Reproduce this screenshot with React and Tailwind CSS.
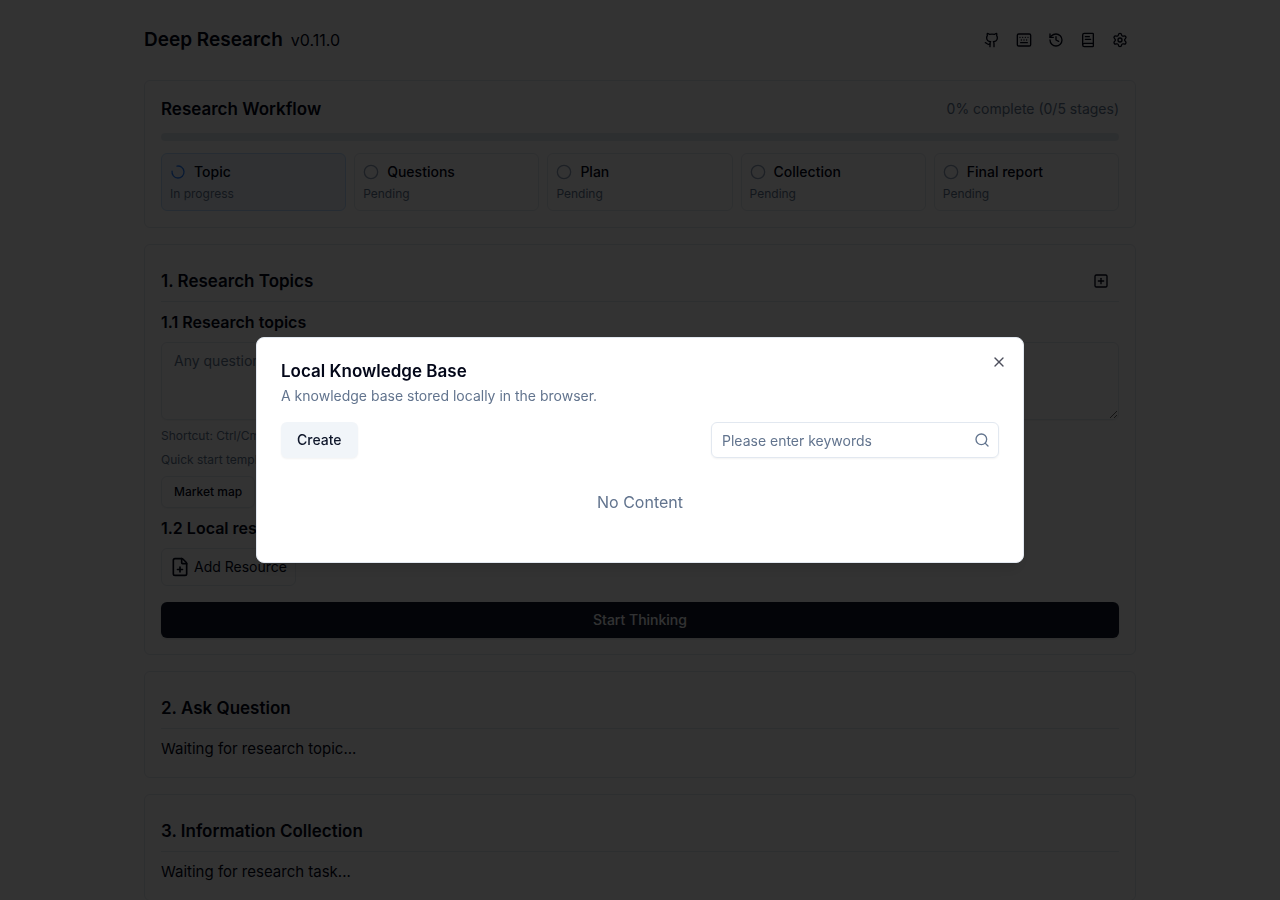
import { useState } from 'react';
import {
  Circle,
  FilePlus,
  Github,
  History,
  LoaderCircle,
  Search,
  Settings,
  SquarePlus,
  X,
} from 'lucide-react';

const steps = [
  { title: 'Topic', status: 'In progress', active: true },
  { title: 'Questions', status: 'Pending' },
  { title: 'Plan', status: 'Pending' },
  { title: 'Collection', status: 'Pending' },
  { title: 'Final report', status: 'Pending' },
];

const templates = ['Market map', 'Competitor analysis', 'Technical review'];

function KeyboardIcon({ className }) {
  return (
    <svg
      className={className}
      viewBox="0 0 24 24"
      fill="none"
      stroke="currentColor"
      strokeWidth={2}
      strokeLinecap="round"
      strokeLinejoin="round"
    >
      <rect x="2" y="3" width="20" height="18" rx="2" />
      <path d="M6 8h.01M10 8h.01M14 8h.01M18 8h.01M8 12h.01M12 12h.01M16 12h.01M7 16h10" />
    </svg>
  );
}

function BookIcon({ className }) {
  return (
    <svg
      className={className}
      viewBox="0 0 24 24"
      fill="none"
      stroke="currentColor"
      strokeWidth={2}
      strokeLinecap="round"
      strokeLinejoin="round"
    >
      <path d="M4 19.5v-15A2.5 2.5 0 0 1 6.500 2H19a1 1 0 0 1 1 1v18a1 1 0 0 1-1 1H6.500a1 1 0 0 1 0-5H20" />
      <path d="M8 7h6M8 11h8" />
    </svg>
  );
}

const actions = [
  { label: 'GitHub', Icon: Github },
  { label: 'Keyboard shortcuts', Icon: KeyboardIcon },
  { label: 'History', Icon: History },
  { label: 'Knowledge base', Icon: BookIcon },
  { label: 'Settings', Icon: Settings },
];

function Header() {
  return (
    <header className="flex h-20 items-center justify-between">
      <h1 className="text-[19px]/7 font-semibold">
        Deep Research
        <small className="ml-2 text-base font-normal">v0.11.0</small>
      </h1>
      <div className="flex">
        {actions.map(({ label, Icon }) => (
          <button
            key={label}
            type="button"
            aria-label={label}
            className="flex h-8 w-8 items-center justify-center rounded-md hover:bg-slate-100"
          >
            <Icon className="h-4 w-4" />
          </button>
        ))}
      </div>
    </header>
  );
}

function Workflow() {
  return (
    <section className="rounded-md border border-slate-200 p-4">
      <div className="mb-3 flex items-center justify-between">
        <h3 className="text-[17px]/6 font-semibold">Research Workflow</h3>
        <span className="text-sm/6 text-slate-500">0% complete (0/5 stages)</span>
      </div>
      <div className="mb-3 h-2 rounded-full bg-slate-200" />
      <ol className="grid grid-cols-5 gap-2">
        {steps.map((step) => (
          <li
            key={step.title}
            className={
              step.active
                ? 'rounded-md border border-blue-200 bg-blue-50 p-2'
                : 'rounded-md border border-slate-200 p-2'
            }
          >
            <div className="flex items-center gap-2 text-sm font-medium">
              {step.active ? (
                <LoaderCircle className="h-4 w-4 -rotate-100 text-blue-500" />
              ) : (
                <Circle className="h-4 w-4 text-slate-400" />
              )}
              {step.title}
            </div>
            <p className="mt-1 text-xs text-slate-500">{step.status}</p>
          </li>
        ))}
      </ol>
    </section>
  );
}

function Section({ title, action, children }) {
  return (
    <section className="mt-4 rounded-md border border-slate-200 p-4">
      <div className="mb-2 flex items-center justify-between border-b border-slate-200">
        <h3 className="text-[17px]/10 font-semibold">{title}</h3>
        {action}
      </div>
      {children}
    </section>
  );
}

function Topics() {
  return (
    <Section
      title="1. Research Topics"
      action={
        <button
          type="button"
          aria-label="New research"
          className="flex h-9 w-9 items-center justify-center rounded-md hover:bg-slate-100"
        >
          <SquarePlus className="h-4 w-4" />
        </button>
      }
    >
      <label htmlFor="topic" className="block font-semibold">
        1.1 Research topics
      </label>
      <textarea
        id="topic"
        rows={3}
        placeholder="Any questions you want to know..."
        className="mt-2 block w-full rounded-md border border-slate-200 px-3 py-2 text-sm shadow-xs placeholder:text-slate-500"
      />
      <p className="mt-2 text-xs text-slate-500">Shortcut: Ctrl/Cmd+↵</p>
      <p className="mt-2 text-xs text-slate-500">Quick start templates</p>
      <div className="mt-2 flex gap-2">
        {templates.map((name) => (
          <button
            key={name}
            type="button"
            className="h-8 rounded-md border border-slate-200 px-3 text-xs font-medium shadow-xs"
          >
            {name}
          </button>
        ))}
      </div>
      <h4 className="mt-2 font-semibold">1.2 Local research resources</h4>
      <button
        type="button"
        className="mt-2 flex items-center gap-1 rounded-md border border-slate-200 p-2 text-sm"
      >
        <FilePlus className="h-5 w-5" />
        Add Resource
      </button>
      <button
        type="button"
        className="mt-4 h-9 w-full rounded-md bg-slate-900 text-sm font-medium text-slate-50 shadow-sm"
      >
        Start Thinking
      </button>
    </Section>
  );
}

function KnowledgeDialog({ onClose }) {
  return (
    <div className="fixed inset-0 z-50 flex items-center justify-center bg-black/80">
      <div
        role="dialog"
        aria-modal="true"
        aria-labelledby="dialog-title"
        className="relative w-full max-w-3xl rounded-lg border border-slate-200 bg-white p-6 shadow-lg"
      >
        <h2 id="dialog-title" className="text-[17px]/[18px] font-semibold">
          Local Knowledge Base
        </h2>
        <p className="mt-1.5 text-sm text-slate-500">
          A knowledge base stored locally in the browser.
        </p>
        <div className="mt-4 flex justify-between">
          <button
            type="button"
            className="h-9 rounded-md bg-slate-100 px-4 text-sm font-medium text-slate-900 shadow-xs"
          >
            Create
          </button>
          <label className="flex h-9 w-72 items-center rounded-md border border-slate-200 pr-2 pl-2.5 text-slate-500 shadow-xs">
            <input
              type="text"
              aria-label="Search keywords"
              placeholder="Please enter keywords"
              className="h-full min-w-0 flex-1 text-sm outline-none placeholder:text-slate-500"
            />
            <Search className="h-4 w-4" />
          </label>
        </div>
        <p className="mt-8 mb-6 text-center text-slate-500">No Content</p>
        <button
          type="button"
          aria-label="Close"
          onClick={onClose}
          className="absolute top-4 right-4 opacity-70 hover:opacity-100"
        >
          <X className="h-4 w-4" />
        </button>
      </div>
    </div>
  );
}

export default function App() {
  const [open, setOpen] = useState(true);

  return (
    <div
      className={`bg-white font-['Inter',sans-serif] text-slate-950 ${
        open ? 'h-screen overflow-hidden' : 'min-h-screen'
      }`}
    >
      <main className="mx-auto max-w-5xl px-4 pb-4">
        <Header />
        <Workflow />
        <Topics />
        <Section title="2. Ask Question">
          <p className="text-[15px]/6">Waiting for research topic...</p>
        </Section>
        <Section title="3. Information Collection">
          <p className="text-[15px]/6">Waiting for research task...</p>
        </Section>
      </main>
      {open && <KnowledgeDialog onClose={() => setOpen(false)} />}
    </div>
  );
}
